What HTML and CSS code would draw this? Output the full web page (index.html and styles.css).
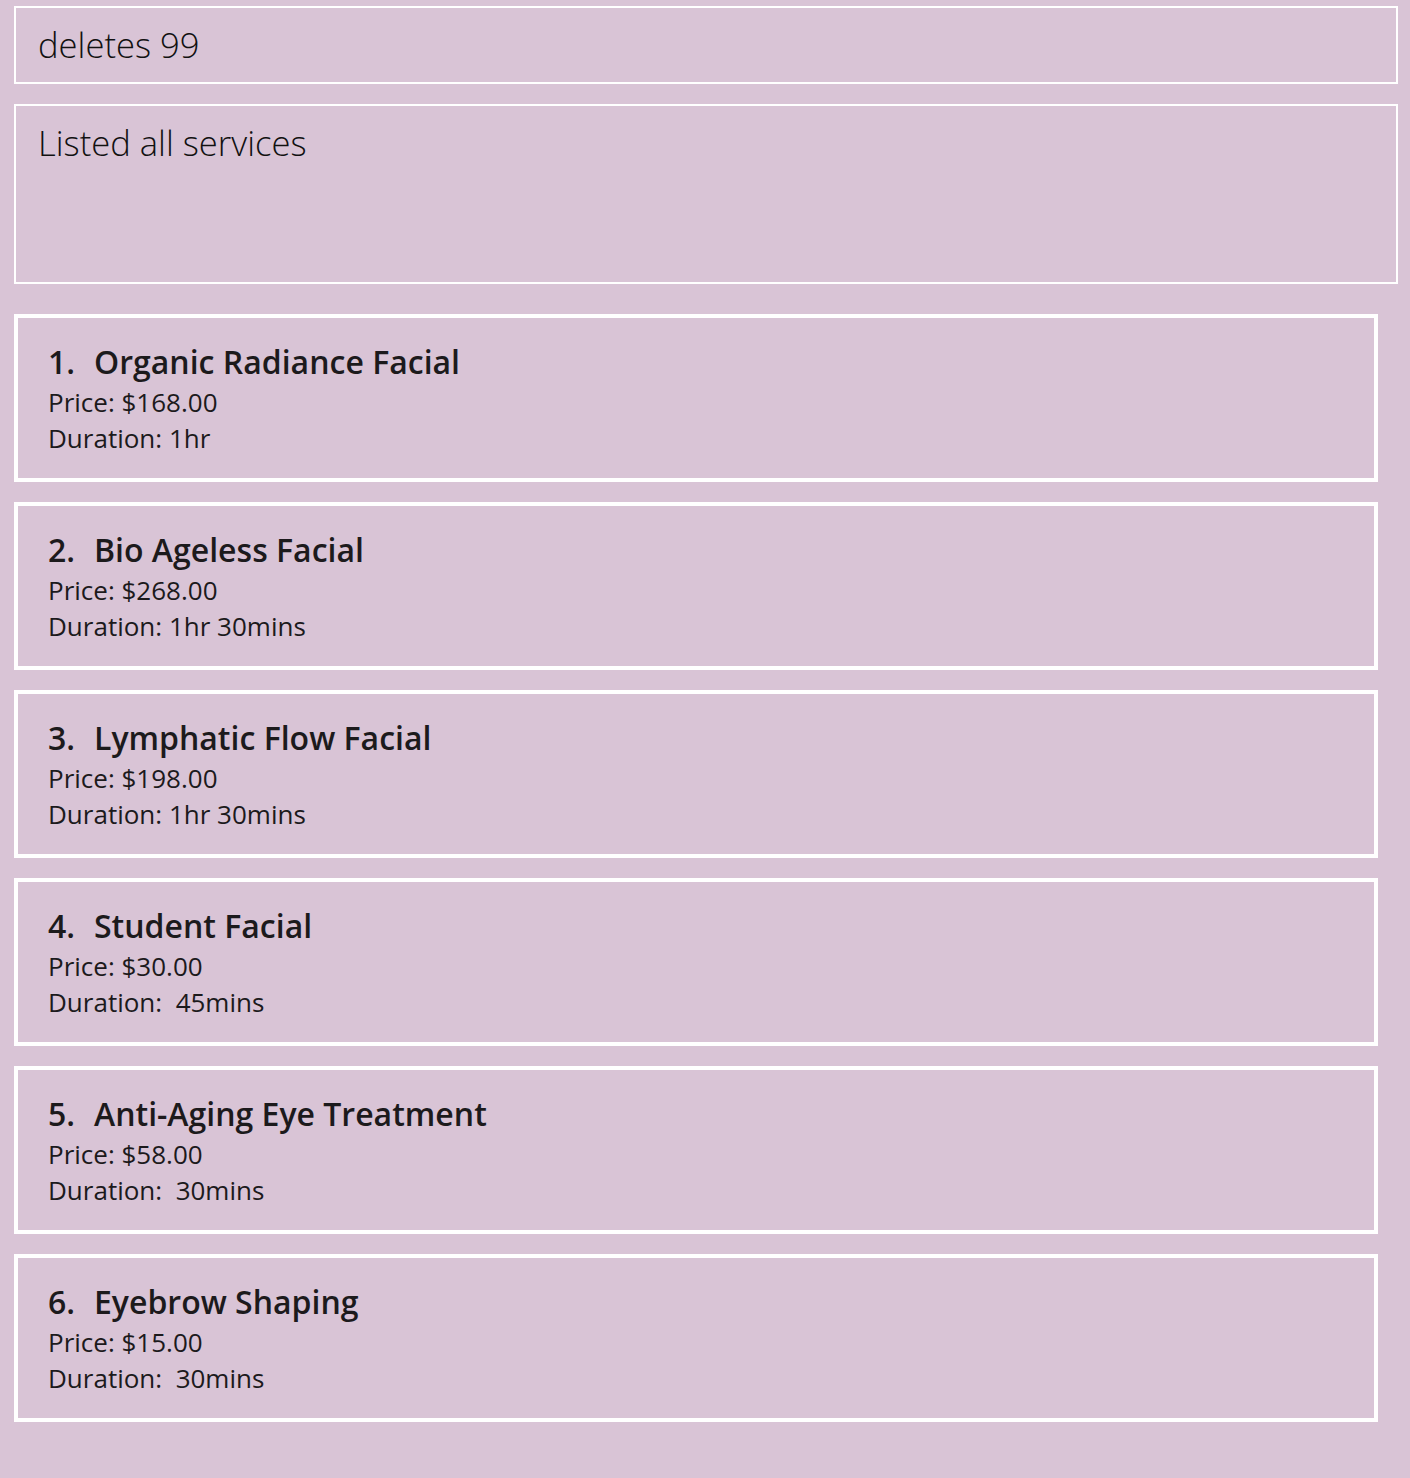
FILE: index.html
```html
<!DOCTYPE html>
<html>
<head>
<meta charset="utf-8">
<link rel="stylesheet" href="styles.css">
</head>
<body>
<div class="page">
  <div class="command-box">deletes 99</div>
  <div class="result-box">Listed all services</div>
  <div class="service-list">
    <div class="card">
      <div class="title"><span class="idx">1.</span>Organic Radiance Facial</div>
      <div class="line">Price: $168.00</div>
      <div class="line">Duration: 1hr</div>
    </div>
    <div class="card">
      <div class="title"><span class="idx">2.</span>Bio Ageless Facial</div>
      <div class="line">Price: $268.00</div>
      <div class="line">Duration: 1hr 30mins</div>
    </div>
    <div class="card">
      <div class="title"><span class="idx">3.</span>Lymphatic Flow Facial</div>
      <div class="line">Price: $198.00</div>
      <div class="line">Duration: 1hr 30mins</div>
    </div>
    <div class="card">
      <div class="title"><span class="idx">4.</span>Student Facial</div>
      <div class="line">Price: $30.00</div>
      <div class="line">Duration: &nbsp;45mins</div>
    </div>
    <div class="card">
      <div class="title"><span class="idx">5.</span>Anti-Aging Eye Treatment</div>
      <div class="line">Price: $58.00</div>
      <div class="line">Duration: &nbsp;30mins</div>
    </div>
    <div class="card">
      <div class="title"><span class="idx">6.</span>Eyebrow Shaping</div>
      <div class="line">Price: $15.00</div>
      <div class="line">Duration: &nbsp;30mins</div>
    </div>
  </div>
</div>
</body>
</html>
```

FILE: styles.css
```css
html, body {
  margin: 0;
  padding: 0;
  background: #d9c4d6;
}
body {
  font-family: "Open Sans", "Noto Sans", sans-serif;
  color: #1c1a1c;
  height: 1478px;
  overflow: hidden;
}
.page {
  padding: 6px 12px 0 14px;
  display: flex;
  flex-direction: column;
}
.command-box {
  box-sizing: border-box;
  height: 78px;
  border: 2px solid #ffffff;
  padding: 0 0 0 22px;
  font-weight: 300;
  font-size: 34.6px;
  line-height: 74px;
  color: #111;
}
.result-box {
  box-sizing: border-box;
  margin-top: 20px;
  height: 180px;
  border: 2px solid #ffffff;
  padding: 12px 0 0 22px;
  font-weight: 300;
  font-size: 34.6px;
  line-height: 50px;
  color: #111;
}
.service-list {
  margin-top: 30px;
  margin-right: 20px;
  display: flex;
  flex-direction: column;
  gap: 20px;
}
.card {
  box-sizing: border-box;
  height: 168px;
  border: 4px solid #ffffff;
  padding: 22px 0 0 30px;
}
.title {
  font-weight: 600;
  font-size: 32px;
  line-height: 44px;
}
.idx {
  display: inline-block;
  width: 46px;
}
.line {
  font-size: 26px;
  line-height: 36px;
}
```
